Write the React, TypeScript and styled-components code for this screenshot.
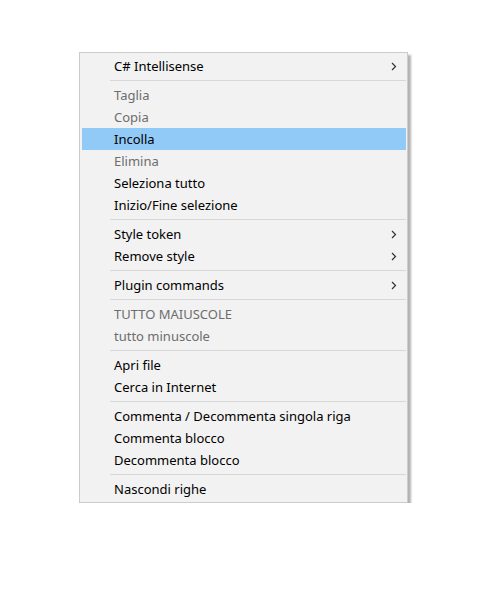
import React from "react";
import styled, { createGlobalStyle } from "styled-components";

const Global = createGlobalStyle`
  html, body { margin: 0; padding: 0; background: #ffffff; }
  body { font-family: "Noto Sans", "Open Sans", sans-serif; }
`;

const Page = styled.div`
  padding: 52px 0 0 79px;
`;

const Menu = styled.div`
  width: 324px;
  background: #f2f2f2;
  border: 1px solid #cccccc;
  padding: 2px 1px 2px 2px;
  box-shadow: 3px 3px 2px rgba(0, 0, 0, 0.3);
  font-family: "Noto Sans", sans-serif;
  font-size: 13px;
`;

const Row = styled.div<{ $disabled?: boolean; $active?: boolean }>`
  height: 22px;
  display: flex;
  align-items: center;
  padding-left: 32px;
  padding-right: 9px;
  color: ${(p) => (p.$disabled ? "#6d6d6d" : "#000000")};
  background: ${(p) => (p.$active ? "#91c9f7" : "transparent")};
`;

const Label = styled.span`
  flex: 1;
  white-space: nowrap;
`;

const Sep = styled.div`
  height: 7px;
  display: flex;
  align-items: center;
  padding-left: 28px;
  &::after {
    content: "";
    flex: 1;
    height: 1px;
    background: #d7d7d7;
  }
`;

const Chevron = () => (
  <svg width="6" height="9" viewBox="0 0 6 9">
    <path d="M1 1 L4.5 4.5 L1 8" stroke="#333" strokeWidth="1.2" fill="none" />
  </svg>
);

type Item =
  | { sep: true }
  | { label: string; disabled?: boolean; active?: boolean; sub?: boolean; sep?: false };

const items: Item[] = [
  { label: "C# Intellisense", sub: true },
  { sep: true },
  { label: "Taglia", disabled: true },
  { label: "Copia", disabled: true },
  { label: "Incolla", active: true },
  { label: "Elimina", disabled: true },
  { label: "Seleziona tutto" },
  { label: "Inizio/Fine selezione" },
  { sep: true },
  { label: "Style token", sub: true },
  { label: "Remove style", sub: true },
  { sep: true },
  { label: "Plugin commands", sub: true },
  { sep: true },
  { label: "TUTTO MAIUSCOLE", disabled: true },
  { label: "tutto minuscole", disabled: true },
  { sep: true },
  { label: "Apri file" },
  { label: "Cerca in Internet" },
  { sep: true },
  { label: "Commenta / Decommenta singola riga" },
  { label: "Commenta blocco" },
  { label: "Decommenta blocco" },
  { sep: true },
  { label: "Nascondi righe" },
];

export default function App() {
  return (
    <Page>
      <Global />
      <Menu>
        {items.map((it, i) =>
          it.sep ? (
            <Sep key={i} />
          ) : (
            <Row key={i} $disabled={it.disabled} $active={it.active}>
              <Label>{it.label}</Label>
              {it.sub && <Chevron />}
            </Row>
          )
        )}
      </Menu>
    </Page>
  );
}
